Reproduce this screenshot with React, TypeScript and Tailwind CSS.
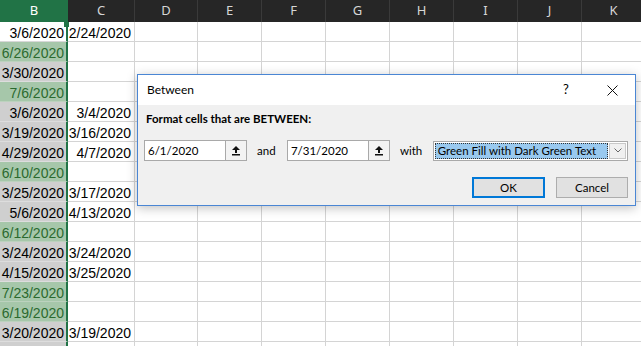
import React from 'react';

type Row = { b: string; kind: 'active' | 'green' | 'gray'; c?: string };

const rows: Row[] = [
  { b: '3/6/2020', kind: 'active', c: '2/24/2020' },
  { b: '6/26/2020', kind: 'green' },
  { b: '3/30/2020', kind: 'gray' },
  { b: '7/6/2020', kind: 'green' },
  { b: '3/6/2020', kind: 'gray', c: '3/4/2020' },
  { b: '3/19/2020', kind: 'gray', c: '3/16/2020' },
  { b: '4/29/2020', kind: 'gray', c: '4/7/2020' },
  { b: '6/10/2020', kind: 'green' },
  { b: '3/25/2020', kind: 'gray', c: '3/17/2020' },
  { b: '5/6/2020', kind: 'gray', c: '4/13/2020' },
  { b: '6/12/2020', kind: 'green' },
  { b: '3/24/2020', kind: 'gray', c: '3/24/2020' },
  { b: '4/15/2020', kind: 'gray', c: '3/25/2020' },
  { b: '7/23/2020', kind: 'green' },
  { b: '6/19/2020', kind: 'green' },
  { b: '3/20/2020', kind: 'gray', c: '3/19/2020' },
  { b: '', kind: 'gray' },
];

const otherCols = [
  { id: 'D', w: 'w-[63px]' },
  { id: 'E', w: 'w-[64px]' },
  { id: 'F', w: 'w-[64px]' },
  { id: 'G', w: 'w-[64px]' },
  { id: 'H', w: 'w-[64px]' },
  { id: 'I', w: 'w-[64px]' },
  { id: 'J', w: 'w-[64px]' },
  { id: 'K', w: 'w-[64px]' },
];

function UploadIcon() {
  return (
    <svg width="10" height="11" viewBox="0 0 10 11">
      <path d="M5 1 L9 5 H6 V8 H4 V5 H1 Z" fill="#111" />
      <rect x="1" y="9" width="8" height="1.5" fill="#111" />
    </svg>
  );
}

function RangeInput({ value }: { value: string }) {
  return (
    <div className="flex h-[21px] w-[103px]">
      <div className="flex h-full w-[82px] items-center border border-[#a9a9a9] bg-white pl-[3px]">
        {value}
      </div>
      <div className="flex h-full w-[21px] items-center justify-center border border-l-0 border-[#a9a9a9] bg-[#f3f3f3]">
        <UploadIcon />
      </div>
    </div>
  );
}

export default function App() {
  return (
    <div className="relative h-[346px] w-[641px] overflow-hidden bg-white font-['Liberation_Sans',sans-serif]">
      {/* column headers */}
      <div className="flex h-[22px] bg-[#262626] font-['Noto_Sans',sans-serif] text-[13px] text-[#d6d6d6]">
        <div className="flex w-[68px] shrink-0 items-center justify-center bg-[#217346] text-white">B</div>
        <div className="flex w-[67px] shrink-0 items-center justify-center border-r border-[#3a3a3a]">C</div>
        {otherCols.map(col => (
          <div key={col.id} className={`flex ${col.w} shrink-0 items-center justify-center border-r border-[#3a3a3a]`}>
            {col.id}
          </div>
        ))}
      </div>

      {/* rows */}
      <div className="text-[14px] leading-[16px] text-black">
        {rows.map((r, i) => (
          <div key={i} className="flex h-[20px]">
            <div
              className={
                r.kind === 'active'
                  ? 'flex w-[68px] shrink-0 items-end justify-end border-r-2 border-b border-r-[#217346] border-b-[#d8d8d8] bg-white pr-[2px]'
                  : r.kind === 'green'
                  ? 'flex w-[68px] shrink-0 items-end justify-end border-r-2 border-b border-r-[#217346] border-b-[#bcd2be] bg-[#a6c7aa] pr-[2px] text-[#2b6a2f]'
                  : 'flex w-[68px] shrink-0 items-end justify-end border-r-2 border-b border-r-[#217346] border-b-[#dddddd] bg-[#cfcfcf] pr-[2px]'
              }
            >
              {r.b}
            </div>
            <div className="flex w-[67px] shrink-0 items-end justify-end border-r border-b border-[#d4d4d4] pr-[3px]">
              {r.c}
            </div>
            {otherCols.map(col => (
              <div key={col.id} className={`${col.w} shrink-0 border-r border-b border-[#d4d4d4]`} />
            ))}
          </div>
        ))}
      </div>

      {/* selection handle */}
      <div className="absolute left-[64px] top-[22px] h-[5px] w-[5px] bg-[#217346]" />

      {/* dialog */}
      <div className="absolute left-[137px] top-[74px] flex h-[132px] w-[499px] flex-col border border-[#4a86d4] bg-[#f0f0f0] font-['Lato',sans-serif] text-[11.5px] text-black shadow-[0_2px_10px_rgba(0,0,0,0.25)]">
        <div className="flex h-[30px] items-center justify-between bg-white pl-[9px] text-[12px]">
          <span>Between</span>
          <div className="flex items-center">
            <span className="w-[46px] text-center text-[13px]">?</span>
            <span className="flex w-[46px] items-center justify-center">
              <svg width="11" height="11" viewBox="0 0 11 11">
                <path d="M0.5 0.5 L10.5 10.5 M10.5 0.5 L0.5 10.5" stroke="#111" strokeWidth="1" />
              </svg>
            </span>
          </div>
        </div>

        <div className="flex flex-1 flex-col pl-[6px] pr-[7px]">
          <div className="ml-[2px] pt-[7px] font-bold leading-[14px]">Format cells that are BETWEEN:</div>

          <div className="mt-[14px] flex h-[21px] items-center">
            <RangeInput value="6/1/2020" />
            <span className="ml-[10px] w-[30px]">and</span>
            <RangeInput value="7/31/2020" />
            <span className="ml-[10px] w-[33px]">with</span>
            <div className="flex h-[20px] w-[196px] items-center border border-[#a9a9a9] bg-white">
              <div className="ml-[1px] flex h-[16px] flex-1 items-center overflow-hidden whitespace-nowrap border border-dotted border-[#333] bg-[#99c9ef] pl-[2px]">
                Green Fill with Dark Green Text
              </div>
              <div className="ml-[1px] mr-[1px] flex h-[16px] w-[17px] items-center justify-center border border-[#c8c8c8] bg-[#f0f0f0]">
                <svg width="8" height="5" viewBox="0 0 8 5">
                  <path d="M0.5 0.5 L4 4 L7.5 0.5" stroke="#666" strokeWidth="1" fill="none" />
                </svg>
              </div>
            </div>
          </div>

          <div className="mt-[16px] flex justify-end gap-[11px]">
            <button className="flex h-[21px] w-[73px] items-center justify-center border-2 border-[#0078d7] bg-[#e1e1e1]">
              OK
            </button>
            <button className="flex h-[21px] w-[72px] items-center justify-center border border-[#adadad] bg-[#e1e1e1]">
              Cancel
            </button>
          </div>
        </div>
      </div>
    </div>
  );
}
